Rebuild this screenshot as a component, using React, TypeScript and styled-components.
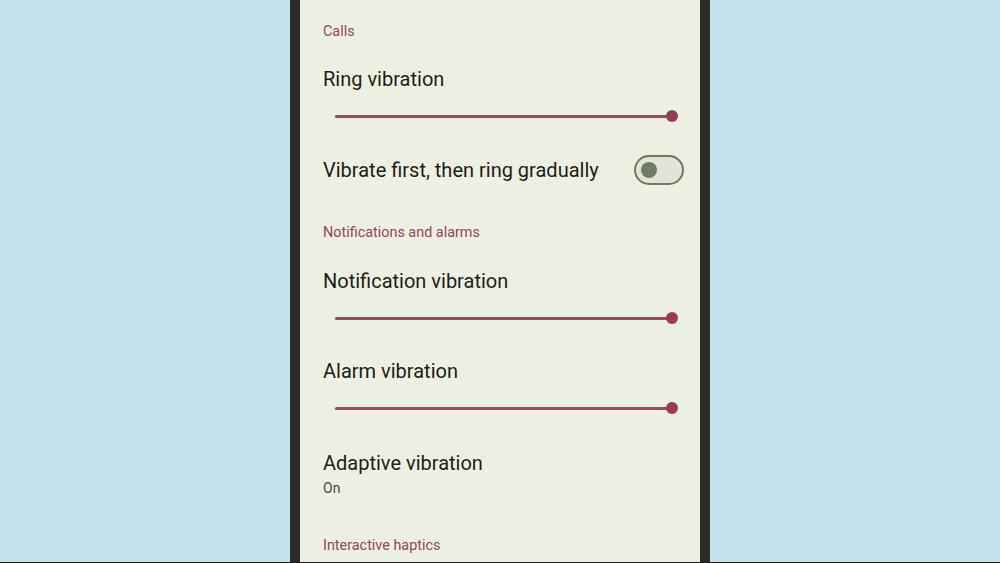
import React from "react";
import styled, { createGlobalStyle } from "styled-components";

const GlobalStyle = createGlobalStyle`
  html, body {
    margin: 0;
    padding: 0;
    background: #c5e3ea;
  }
  body {
    font-family: Roboto, "Noto Sans", sans-serif;
  }
`;

const Stage = styled.div`
  width: 1000px;
  height: 563px;
  overflow: hidden;
  display: flex;
  justify-content: center;
  background: #c5e3ea;
  border-bottom: 1px solid #1f201d;
  box-sizing: border-box;
`;

const Phone = styled.div`
  width: 420px;
  height: 100%;
  background: #2b2c2a;
  padding: 0 10px;
  box-sizing: border-box;
`;

const Screen = styled.div`
  height: 100%;
  background: #edefe2;
  display: flex;
  flex-direction: column;
  padding: 2px 16px 0 23px;
  box-sizing: border-box;
`;

const SectionHeader = styled.div`
  padding: 19px 0 4px;
  line-height: 20px;
  font-size: 14.4px;
  color: #94465a;

  &:first-child {
    padding: 20px 0 3px;
  }
`;

const Item = styled.div<{ $pt?: number; $pb?: number }>`
  padding: ${(p) => p.$pt ?? 16}px 0 ${(p) => p.$pb ?? 0}px;
  display: flex;
  flex-direction: column;
`;

const Title = styled.div<{ $lh?: number }>`
  font-size: 20px;
  line-height: ${(p) => p.$lh ?? 36}px;
  color: #1c1d17;
`;

const Summary = styled.div`
  font-size: 14px;
  line-height: 18px;
  color: #46483f;
`;

const SliderBox = styled.div`
  height: 38px;
  display: flex;
  align-items: center;
  padding: 0 12px;
`;

const Track = styled.div`
  position: relative;
  flex: 1;
  height: 3px;
  border-radius: 2px;
  background: #d9c3c8;
`;

const Active = styled.div`
  height: 100%;
  border-radius: 2px;
  background: #98495e;
`;

const Thumb = styled.div`
  position: absolute;
  top: 50%;
  width: 12px;
  height: 12px;
  margin: -6px 0 0 -6px;
  border-radius: 50%;
  background: #953c5a;
`;

const ToggleRow = styled.div`
  height: 69px;
  display: flex;
  align-items: center;
  justify-content: space-between;
`;

const Switch = styled.div<{ $on: boolean }>`
  width: 50px;
  height: 30px;
  box-sizing: border-box;
  border: 2px solid #6f7766;
  border-radius: 15px;
  background: #e1e4d6;
  display: flex;
  align-items: center;
  justify-content: ${(p) => (p.$on ? "flex-end" : "flex-start")};
  padding: 0 5px;
`;

const Knob = styled.div`
  width: 16px;
  height: 16px;
  border-radius: 50%;
  background: #6f7a69;
`;

const Slider = ({ value }: { value: number }) => (
  <SliderBox>
    <Track>
      <Active style={{ width: `${value}%` }} />
      <Thumb style={{ left: `${value}%` }} />
    </Track>
  </SliderBox>
);

const SliderItem = ({ title, value }: { title: string; value: number }) => (
  <Item>
    <Title>{title}</Title>
    <Slider value={value} />
  </Item>
);

export default function App() {
  return (
    <>
      <GlobalStyle />
      <Stage>
        <Phone>
          <Screen>
            <SectionHeader>Calls</SectionHeader>
            <SliderItem title="Ring vibration" value={100} />
            <ToggleRow>
              <Title>Vibrate first, then ring gradually</Title>
              <Switch $on={false}>
                <Knob />
              </Switch>
            </ToggleRow>
            <SectionHeader>Notifications and alarms</SectionHeader>
            <SliderItem title="Notification vibration" value={100} />
            <SliderItem title="Alarm vibration" value={100} />
            <Item $pt={20} $pb={20}>
              <Title $lh={32}>Adaptive vibration</Title>
              <Summary>On</Summary>
            </Item>
            <SectionHeader>Interactive haptics</SectionHeader>
          </Screen>
        </Phone>
      </Stage>
    </>
  );
}
